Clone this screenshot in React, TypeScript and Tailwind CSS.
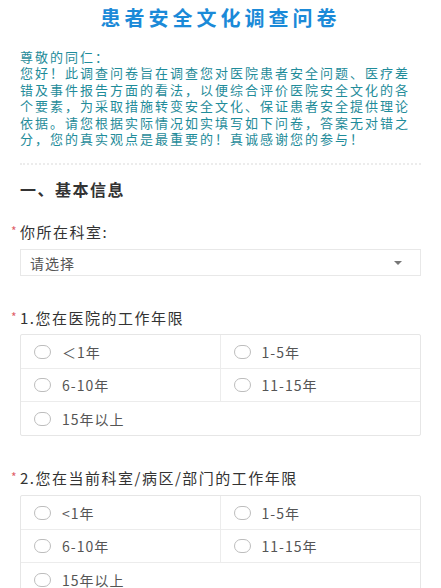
import React from "react";

const font = { fontFamily: '"Noto Sans CJK SC", "Noto Sans", sans-serif' };

const intro = [
  "尊敬的同仁：",
  "您好！此调查问卷旨在调查您对医院患者安全问题、医疗差",
  "错及事件报告方面的看法，以便综合评价医院安全文化的各",
  "个要素，为采取措施转变安全文化、保证患者安全提供理论",
  "依据。请您根据实际情况如实填写如下问卷，答案无对错之",
  "分，您的真实观点是最重要的！真诚感谢您的参与！",
];

function Radio({ label }: { label: string }) {
  return (
    <div className="flex items-center h-full pl-[13px]">
      <span className="w-[17px] h-[14px] rounded-full border border-[#bdbdbd] bg-white shrink-0" />
      <span className="ml-[11px] text-[14px] text-[#555] tracking-[1px] leading-none">{label}</span>
    </div>
  );
}

function OptionGrid({ first }: { first: string }) {
  return (
    <div className="mx-5 border border-[#e6e6e6] rounded-[2px]">
      <div className="grid grid-cols-2 h-[34px] border-b border-[#ececec]">
        <div className="border-r border-[#ececec]">
          <Radio label={first} />
        </div>
        <Radio label="1-5年" />
      </div>
      <div className="grid grid-cols-2 h-[33px] border-b border-[#ececec]">
        <div className="border-r border-[#ececec]">
          <Radio label="6-10年" />
        </div>
        <Radio label="11-15年" />
      </div>
      <div className="h-[33px]">
        <Radio label="15年以上" />
      </div>
    </div>
  );
}

function QLabel({ text }: { text: string }) {
  return (
    <div className="flex items-center h-[22px] pl-[11px]">
      <span className="text-[#e0606a] text-[12px] w-[9px] leading-none">*</span>
      <span className="text-[15px] text-[#333] tracking-[1.5px] leading-none">{text}</span>
    </div>
  );
}

export default function App() {
  return (
    <div className="w-[441px] h-[588px] bg-white overflow-hidden" style={font}>
      <div className="pt-[4px] h-[28px] box-content flex justify-center">
        <h1 className="text-[20px] font-bold text-[#1b8ad8] tracking-[4px] leading-[28px]">
          患者安全文化调查问卷
        </h1>
      </div>
      <div className="mt-[17px] px-5 text-[13px] text-[#1f8c9a] tracking-[2px] leading-[16.4px]">
        {intro.map((l, i) => (
          <div key={i} className="whitespace-nowrap">{l}</div>
        ))}
      </div>
      <div className="mx-5 mt-[16px] border-t-2 border-dotted border-[#ececec]" />
      <div className="mt-[13px] px-5 h-[22px] flex items-center">
        <span className="text-[16px] font-bold text-[#333] tracking-[1.5px] leading-none">一、基本信息</span>
      </div>
      <div className="mt-[20px]">
        <QLabel text="你所在科室:" />
      </div>
      <div className="mt-[7px] mx-5 h-[27px] border border-[#e8e8e8] flex items-center justify-between pl-[9px] pr-[18px]">
        <span className="text-[14px] text-[#555] tracking-[1px] leading-none">请选择</span>
        <span className="w-0 h-0 border-l-[4px] border-r-[4px] border-t-[4px] border-l-transparent border-r-transparent border-t-[#777]" />
      </div>
      <div className="mt-[30px]">
        <QLabel text="1.您在医院的工作年限" />
      </div>
      <div className="mt-[6px]">
        <OptionGrid first="＜1年" />
      </div>
      <div className="mt-[30px]">
        <QLabel text="2.您在当前科室/病区/部门的工作年限" />
      </div>
      <div className="mt-[7px]">
        <OptionGrid first="<1年" />
      </div>
    </div>
  );
}
